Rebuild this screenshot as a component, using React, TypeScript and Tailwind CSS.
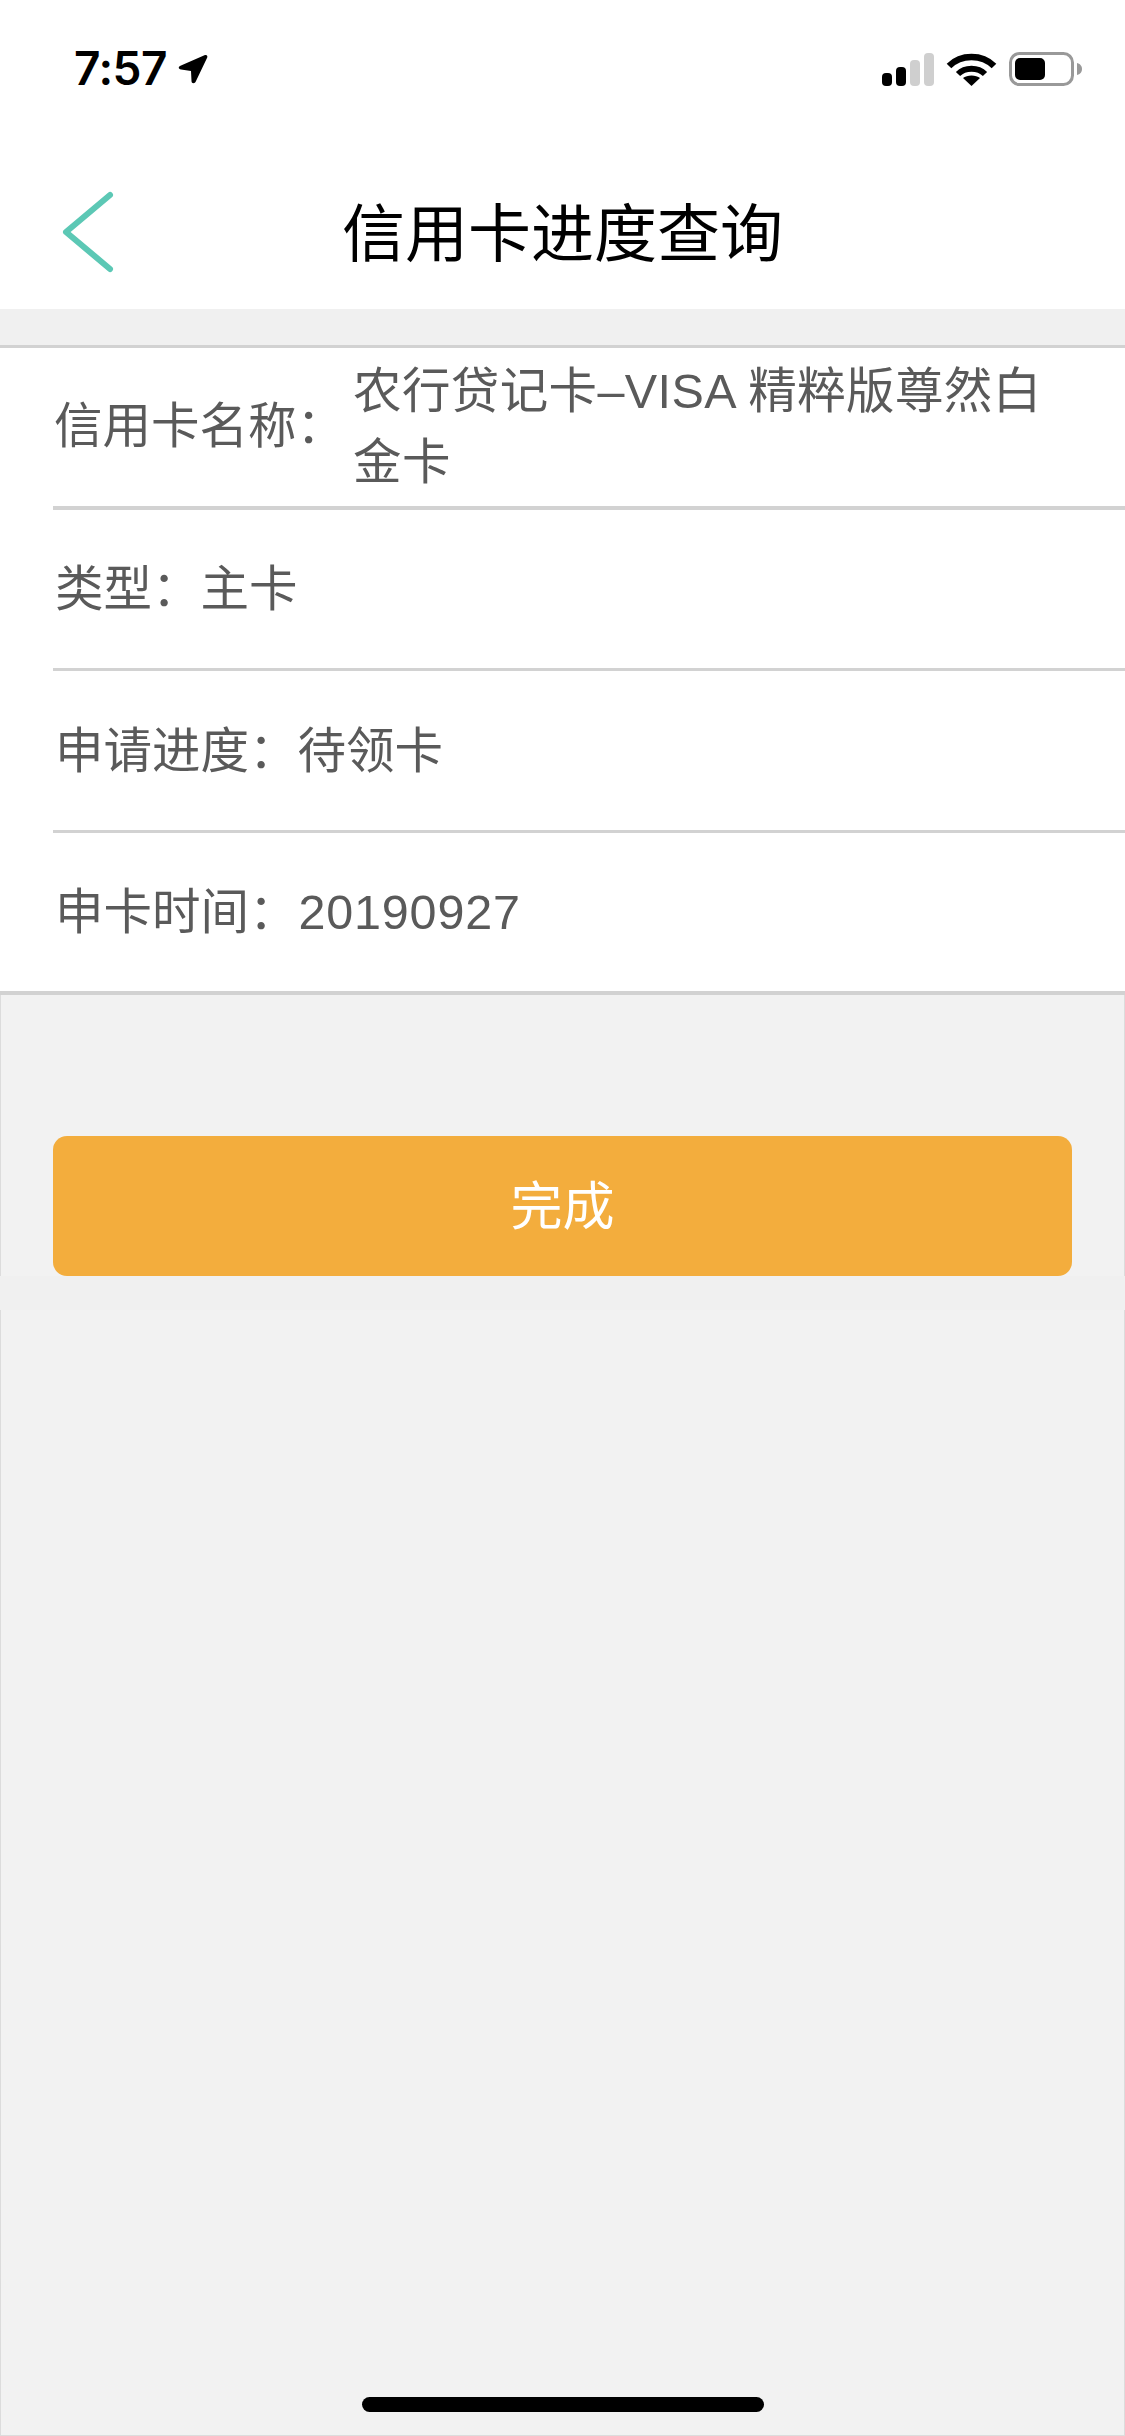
const font = "font-['Liberation_Sans','Noto_Sans_CJK_SC',sans-serif]";

function StatusIcons() {
  return (
    <svg width="208" height="36" viewBox="0 0 208 36" className="block" aria-hidden>
      <rect x="2" y="21" width="10" height="13" rx="4" fill="#000" />
      <rect x="16" y="15" width="10" height="19" rx="4" fill="#000" />
      <rect x="30" y="8" width="10" height="26" rx="4" fill="#cfcfcf" />
      <rect x="44" y="1" width="10" height="33" rx="4" fill="#cfcfcf" />
      <path d="M69 14 C81 2 102 2 114 14" fill="none" stroke="#000" strokeWidth="6.5" />
      <path d="M78 22 C85 15 98 15 105 22" fill="none" stroke="#000" strokeWidth="6" />
      <path d="M91.5 34 L83 26 C87 22.5 96 22.5 100 26 Z" fill="#000" />
      <rect x="130.5" y="1.5" width="62" height="31" rx="9" fill="#fff" stroke="#999" strokeWidth="3" />
      <rect x="135" y="6" width="30" height="22" rx="5" fill="#000" />
      <path d="M197 11 C201 12 202 15 202 17 C202 19 201 22 197 23 Z" fill="#999" />
    </svg>
  );
}

function Row({ label, value, tall, wide }: { label: string; value: string; tall?: boolean; wide?: boolean }) {
  return (
    <div
      className={[
        'flex items-center pl-[55px] text-[48.5px] leading-[72px] text-[#5a5a5a]',
        tall ? 'h-[159px]' : 'h-[158px]',
      ].join(' ')}
    >
      <span className="whitespace-pre">{label}</span>
      <span className={wide ? 'pl-[1px] tracking-[0.8px]' : ''}>{value}</span>
    </div>
  );
}

export default function App() {
  return (
    <div className={`${font} flex h-[2436px] w-[1125px] flex-col overflow-hidden bg-[#f0f0f0]`}>
      <header className="h-[309px] bg-white">
        <div className="flex h-[132px] items-start justify-between pl-[74px] pr-[37px] pt-[52px]">
          <div className="flex items-center gap-[11px]">
            <span className="font-['Inter',sans-serif] text-[46px] font-semibold leading-[33px] tracking-[-0.5px] text-black">
              7:57
            </span>
            <svg width="30" height="30" viewBox="0 0 30 30" aria-hidden>
              <path
                d="M27 1 C29 0.5 30 2 29 4 L18 27 C17 30 13.5 30 13.5 27 L13 17 L3 15.5 C0 15 0 12.5 3 11.5 Z"
                fill="#000"
              />
            </svg>
          </div>
          <StatusIcons />
        </div>
        <div className="relative flex h-[177px] items-center justify-center pt-[28px]">
          <svg
            width="60"
            height="90"
            viewBox="0 0 60 90"
            className="absolute left-[58px] top-[56px]"
            aria-hidden
          >
            <path
              d="M52 7 L8 44 L52 81"
              fill="none"
              stroke="#5cc8b5"
              strokeWidth="6"
              strokeLinecap="round"
              strokeLinejoin="round"
            />
          </svg>
          <h1 className="text-[63px] font-normal leading-none text-black">信用卡进度查询</h1>
        </div>
      </header>

      <div className="h-[36px]" />

      <section className="border-b-[4px] border-t-[3px] border-[#d2d2d2] bg-white">
        <div className="flex h-[158px] items-center pl-[54px] text-[48.5px] text-[#5a5a5a]">
          <span className="mt-[-2px] w-[299px] shrink-0">信用卡名称：</span>
          <span className="w-[700px] leading-[71px] tracking-[0.4px]">农行贷记卡–VISA 精粹版尊然白金卡</span>
        </div>
        <div className="ml-[53px] h-[4px] bg-[#d2d2d2]" />
        <Row label="类型：" value="主卡" />
        <div className="ml-[53px] h-[3px] bg-[#d2d2d2]" />
        <Row label="申请进度：" value="待领卡" tall />
        <div className="ml-[53px] h-[3px] bg-[#d2d2d2]" />
        <Row label="申卡时间：" value="20190927" wide />
      </section>

      <div className="h-[281px] border-x border-[#dcdcdc] bg-[#f2f2f2] px-[52px] pt-[141px]">
        <button
          type="button"
          className="flex h-[140px] w-full items-center justify-center rounded-[14px] bg-[#f3ad3d] pt-[2px] text-[52px] text-white"
        >
          完成
        </button>
      </div>
      <div className="h-[34px]" />
      <div className="flex flex-1 items-start justify-center border-x border-b border-[#dcdcdc] bg-[#f2f2f2] pt-[1087px]">
        <div className="h-[15px] w-[402px] rounded-full bg-black" />
      </div>
    </div>
  );
}
